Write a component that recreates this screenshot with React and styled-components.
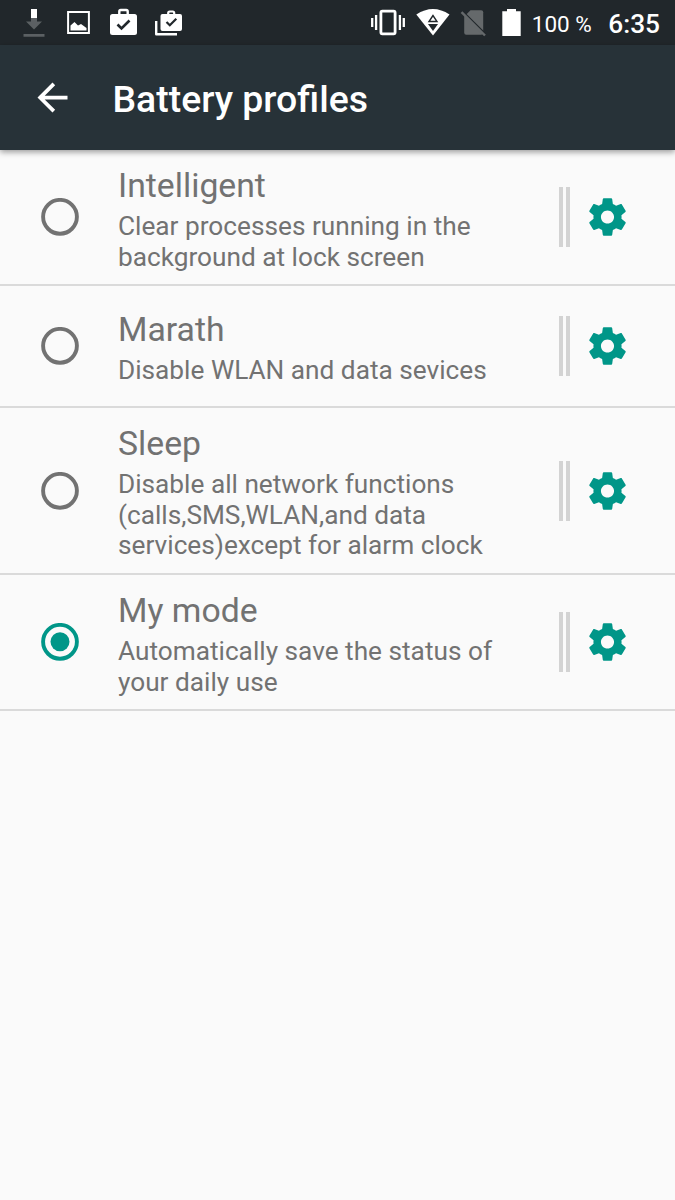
import React from "react";
import styled, { createGlobalStyle } from "styled-components";

const GlobalStyle = createGlobalStyle`
  * { box-sizing: border-box; }
  body { margin: 0; background: #fafafa; font-family: Roboto, "Liberation Sans", sans-serif; }
`;
const Screen = styled.div`
  min-height: 1200px;
  background: #fafafa;
`;
const StatusBar = styled.header`
  display: flex;
  align-items: center;
  height: 45px;
  padding: 0 15px 0 23px;
  background: #21272b;
  color: #fff;
`;
const StatusIcon = styled.svg`
  display: block;
  flex: none;
  width: ${(p) => p.$w}px;
  height: 45px;
  margin-right: ${(p) => p.$gap || 0}px;
`;
const Spacer = styled.div`
  flex: 1;
`;
const BatteryText = styled.span`
  font-size: 22.5px;
  line-height: 45px;
  width: 76.5px;
  padding-top: 3px;
  white-space: nowrap;
`;
const Clock = styled.time`
  font-size: 26.25px;
  font-weight: 500;
  line-height: 45px;
  padding-top: 3px;
`;
const AppBar = styled.nav`
  position: relative;
  display: flex;
  align-items: center;
  height: 105px;
  padding-left: 30px;
  background: #273238;
  color: #fff;
  box-shadow: 0 2px 6px rgba(0, 0, 0, 0.4);
`;
const BackButton = styled.button`
  width: 45px;
  height: 45px;
  margin-right: 37.5px;
  padding: 0;
  border: 0;
  background: none;
  color: inherit;
`;
const Title = styled.h1`
  margin: 0;
  padding-top: 2px;
  font-size: 37.4px;
  font-weight: 500;
`;
const List = styled.ul`
  margin: 0;
  padding: 0;
  list-style: none;
`;
const Row = styled.li`
  display: flex;
  align-items: center;
  height: ${(p) => p.$height}px;
  padding: 0 45px 0 41px;
  border-bottom: 2px solid #dadada;
`;
const Radio = styled.svg`
  display: block;
  flex: none;
  width: 38px;
  height: 38px;
  color: ${(p) => (p.$checked ? "#009688" : "#727272")};
`;
const Copy = styled.div`
  flex: 1;
  margin-left: 39px;
  padding-top: 3.2px;
  color: #727272;
  white-space: nowrap;
`;
const Name = styled.h2`
  margin: 0 0 4px;
  font-size: 33.75px;
  font-weight: 400;
  line-height: 36px;
`;
const Summary = styled.p`
  margin: 0;
  padding-top: 3px;
  margin-bottom: -3px;
  font-size: 26.22px;
  line-height: 30.8px;
`;
const Divider = styled.span`
  width: 11px;
  height: 60px;
  margin-right: 15px;
  border: solid #d3d3d3;
  border-width: 0 4px;
`;
const Gear = styled.svg`
  display: block;
  width: 45px;
  height: 46px;
  fill: #009688;
`;

const profiles = [
  { name: "Intelligent", height: 136, lines: ["Clear processes running in the", "background at lock screen"] },
  { name: "Marath", height: 122, lines: ["Disable WLAN and data sevices"] },
  { name: "Sleep", height: 167, lines: ["Disable all network functions", "(calls,SMS,WLAN,and data", "services)except for alarm clock"] },
  { name: "My mode", height: 136, checked: true, lines: ["Automatically save the status of", "your daily use"] },
];

function GearIcon() {
  return (
    <Gear viewBox="0 0 24 24">
      <path d="M19.43 12.98c.04-.32.07-.64.07-.98s-.03-.66-.07-.98l2.11-1.65c.19-.15.24-.42.12-.64l-2-3.46c-.12-.22-.39-.3-.61-.22l-2.49 1c-.52-.4-1.08-.73-1.69-.98l-.38-2.65C14.46 2.18 14.25 2 14 2h-4c-.25 0-.46.18-.49.42l-.38 2.65c-.61.25-1.17.59-1.69.98l-2.49-1c-.23-.09-.49 0-.61.22l-2 3.46c-.13.22-.07.49.12.64l2.11 1.65c-.04.32-.07.65-.07.98s.03.66.07.98l-2.11 1.65c-.19.15-.24.42-.12.64l2 3.46c.12.22.39.3.61.22l2.49-1c.52.4 1.08.73 1.69.98l.38 2.65c.03.24.24.42.49.42h4c.25 0 .46-.18.49-.42l.38-2.65c.61-.25 1.17-.59 1.69-.98l2.49 1c.23.09.49 0 .61-.22l2-3.46c.12-.22.07-.49-.12-.64l-2.11-1.65zM12 15.5c-1.93 0-3.5-1.57-3.5-3.5s1.57-3.5 3.5-3.5 3.5 1.57 3.5 3.5-1.57 3.5-3.5 3.5z" />
    </Gear>
  );
}

export default function App() {
  return (
    <Screen>
      <GlobalStyle />
      <StatusBar>
        <StatusIcon $w={22} $gap={22} viewBox="0 0 22 45">
          <path d="M8 9h6v9H8z" fill="#fff" />
          <path d="M8 18h6v3.500h5l-8 8-8-8h5zM.5 34h21v2.800H.5z" fill="#5b6063" />
        </StatusIcon>
        <StatusIcon $w={23} $gap={20} viewBox="0 0 23 45">
          <path d="M1.100 12.100h20.800v20.800H1.100z" fill="none" stroke="#fff" strokeWidth="2" />
          <path d="M3.500 30.500v-5l4-3.500 3.500 3.500 3-1.500 5.500 4v2.500z" fill="#fff" />
        </StatusIcon>
        <StatusIcon $w={27} $gap={18} viewBox="0 0 27 45">
          <path d="M9.300 14v-2.500q0-1.500 1.500-1.500h5.400q1.500 0 1.500 1.500V14" fill="none" stroke="#fff" strokeWidth="2.400" />
          <rect y="14" width="27" height="21" rx="2.500" fill="#fff" />
          <path d="M7.500 24.500l4 4 8-8" fill="none" stroke="#21272b" strokeWidth="2.600" />
        </StatusIcon>
        <StatusIcon $w={27} viewBox="0 0 27 45">
          <path d="M1.200 21v13.300h20.800" fill="none" stroke="#fff" strokeWidth="2.400" strokeLinejoin="round" />
          <path d="M13.200 15v-2q0-1.500 1.500-1.500h3q1.500 0 1.500 1.500v2" fill="none" stroke="#fff" strokeWidth="2.200" />
          <rect x="5.500" y="14" width="21.500" height="17" rx="2" fill="#fff" />
          <path d="M11.500 22l3.300 3.300 6.500-6.500" fill="none" stroke="#21272b" strokeWidth="2.200" />
        </StatusIcon>
        <Spacer />
        <StatusIcon $w={34} $gap={11} viewBox="0 0 34 45">
          <rect x="9.900" y="11.200" width="14.200" height="22.600" rx="1.500" fill="none" stroke="#fff" strokeWidth="2.800" />
          <path d="M1.200 18v9M5.100 15v15M28.900 15v15M32.800 18v9" stroke="#fff" strokeWidth="2.300" />
        </StatusIcon>
        <StatusIcon $w={34} $gap={10} viewBox="0 0 34 45">
          <path d="M.3 14.500Q17 3.500 33.500 14.500L17 35.500z" fill="#fff" />
          <path d="M17 15.500l-4 6h8z" fill="none" stroke="#21272b" strokeWidth="1.400" />
          <path d="M17 31l-5-7h10z" fill="#21272b" />
        </StatusIcon>
        <StatusIcon $w={26} $gap={16} viewBox="0 0 26 45">
          <path d="M10.500 10.200h10.700q2 0 2 2v20.500q0 2-2 2h-15q-2 0-2-2V16.500z" fill="#65696b" />
          <path d="M3 11.500L26 34.500" stroke="#21272b" strokeWidth="1.600" />
          <path d="M1.500 12.200L25 35.500" stroke="#65696b" strokeWidth="2.400" />
        </StatusIcon>
        <StatusIcon $w={19} $gap={10.5} viewBox="0 0 19 45">
          <path d="M5 9h9v2.300h4.700V36H.3V11.300H5z" fill="#fff" />
        </StatusIcon>
        <BatteryText>100 %</BatteryText>
        <Clock>6:35</Clock>
      </StatusBar>
      <AppBar>
        <BackButton aria-label="Back">
          <svg width="45" height="45" viewBox="0 0 24 24" fill="currentColor" display="block">
            <path d="M20 11H7.830l5.590-5.590L12 4l-8 8 8 8 1.410-1.410L7.830 13H20v-2z" />
          </svg>
        </BackButton>
        <Title>Battery profiles</Title>
      </AppBar>
      <List>
        {profiles.map((p) => (
          <Row key={p.name} $height={p.height}>
            <Radio viewBox="0 0 38 38" role="radio" aria-checked={!!p.checked} $checked={p.checked}>
              <circle cx="19" cy="18.800" r="16.900" fill="none" stroke="currentColor" strokeWidth="3.900" />
              {p.checked && <circle cx="19" cy="18.800" r="9.500" fill="currentColor" />}
            </Radio>
            <Copy>
              <Name>{p.name}</Name>
              <Summary>
                {p.lines.map((line) => (
                  <React.Fragment key={line}>
                    {line}
                    <br />
                  </React.Fragment>
                ))}
              </Summary>
            </Copy>
            <Divider />
            <GearIcon />
          </Row>
        ))}
      </List>
    </Screen>
  );
}
